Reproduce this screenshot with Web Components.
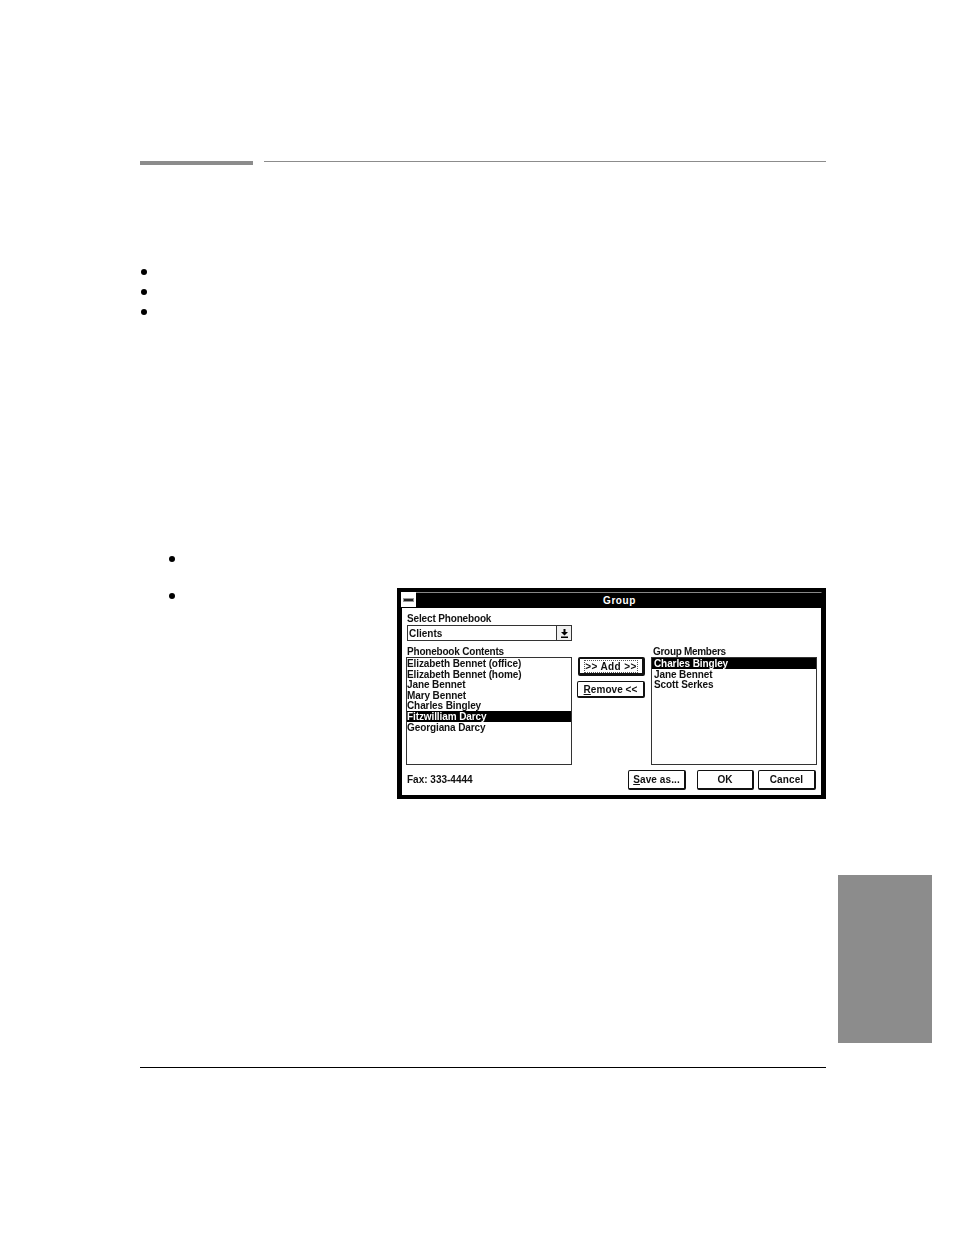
<!DOCTYPE html>
<html><head><meta charset="utf-8"><title>Group</title>
<style>html,body{margin:0;background:#fff}</style></head>
<body>
<manual-page>
  <page-header></page-header>
  <dot-list style="margin-top:97px"><span></span><span></span><span></span></dot-list>
  <dot-list style="margin:227px 0 0 28px"><span></span></dot-list>
  <section-row>
    <group-dialog></group-dialog>
  </section-row>
  <edge-tab></edge-tab>
  <page-rule></page-rule>
</manual-page>
<script>
function el(name,css,html){
  customElements.define(name,class extends HTMLElement{
    constructor(){super();this.attachShadow({mode:'open'}).innerHTML='<style>'+css+'</style>'+html;}
  });
}
el('manual-page',`:host{display:block;width:954px;height:1235px;padding:161px 128px 0 140px;box-sizing:border-box;overflow:hidden}`,`<slot></slot>`);
el('page-header',`:host{display:flex;gap:11px;align-items:flex-start;height:4px}
 .a{width:113px;height:4px;background:#8c8c8c}.b{flex:1;height:1px;background:#8c8c8c}`,`<div class="a"></div><div class="b"></div>`);
el('dot-list',`:host{display:block}
 ::slotted(span){display:flex;height:20px;align-items:center}
 ::slotted(span)::before{content:"";width:6px;height:6px;border-radius:50%;background:#000;margin-left:1px}`,`<slot></slot>`);
el('section-row',`:host{display:flex;margin-top:19px;padding-left:28px}
 .d{width:6px;height:6px;border-radius:50%;background:#000;margin:5px 222px 0 1px;flex:none}`,`<div class="d"></div><slot></slot>`);
el('edge-tab',`:host{display:block;width:94px;height:168px;margin:76px 0 0 698px;background:#8c8c8c}`,``);
el('page-rule',`:host{display:block;height:1px;background:#000;margin-top:24px}`,``);
el('win-list',`:host{display:block;box-sizing:border-box;width:166px;height:108px;border:1px solid #333;background:#fff;letter-spacing:-.1px}
 ::slotted(div){height:10.6px;line-height:11px;padding-left:var(--pad,0);white-space:nowrap}
 ::slotted(.sel){background:#000;color:#fff}`,`<slot></slot>`);
el('win-button',`:host{display:flex;box-sizing:border-box;align-items:center;justify-content:center;height:20px;border:1px solid #111;border-right-width:2px;border-bottom-width:2px;border-radius:2px;background:#fff;white-space:nowrap;letter-spacing:var(--ls,.1px)}
 :host([default]){border-width:2px;border-right-width:3px;border-bottom-width:3px}
 .f{display:flex;align-items:center;justify-content:center}
 :host([default]) .f{border:1px dotted #555;padding:0;width:54px;box-sizing:border-box;height:13px}
 ::slotted(u){text-decoration:underline}`,`<div class="f"><slot></slot></div>`);
el('group-dialog',`:host{display:block;box-sizing:border-box;width:429px;height:211px;border:4px solid #000;background:#fff;font:bold 10px/11px "Liberation Sans",sans-serif;color:#111}
 .wrap{border-right:1px solid #000;border-left:1px solid #000;border-top:1px solid #888;box-sizing:border-box;height:100%;display:flex;flex-direction:column}
 .title{height:15px;flex:none;background:#000;color:#fff;display:flex;align-items:center;position:relative;justify-content:center;padding-left:16px;letter-spacing:.6px}
 .sys{position:absolute;left:-1px;top:-1px;width:15px;height:15px;background:#fff;display:flex;align-items:center;justify-content:center;box-sizing:border-box}
 .sys i{display:block;width:9px;height:2px;background:#222;box-shadow:0 0 0 1px #999}
 .body{flex:1;display:grid;grid-template-columns:166px 67px 166px;column-gap:6px;padding:5px 0 0 4px;grid-template-rows:12px 16px 16px 108px 1fr;filter:blur(.25px)}
 .sl{grid-column:1/4;padding-left:1px;line-height:12px;letter-spacing:-.15px}
 .combo{grid-column:1/4;display:flex;width:165px;margin-left:1px;height:16px;border:1px solid #333;box-sizing:border-box}
 .combo span{flex:1;padding-left:1px;line-height:15px}
 .combo b{width:14px;border-left:1px solid #333;display:flex;align-items:center;justify-content:center;background:#f0f0f0}
 .lbl{padding:5px 0 0 1px;line-height:11px;white-space:nowrap;letter-spacing:-.2px}
 .r{padding-left:2px;letter-spacing:-.3px}
 .mid{display:flex;flex-direction:column;gap:5px}
 .mid win-button:first-child{height:19px;--ls:.4px}
 .mid win-button:last-child{height:17px;margin-left:-1px;--ls:.05px}
 win-list.l2{--pad:2px}
 .foot{grid-column:1/4;display:flex;align-items:flex-start;padding:5px 0 0 1px;width:409px}
 .foot .fax{flex:1;line-height:20px}
 .sa{width:58px;margin-right:11px}.ok{width:57px;margin-right:4px}.ca{width:58px}`,
`<div class="wrap">
 <div class="title"><div class="sys"><i></i></div>Group</div>
 <div class="body">
  <div class="sl">Select Phonebook</div>
  <div class="combo"><span>Clients</span><b><svg width="7" height="9" viewBox="0 0 7 9"><path d="M2.5 0h2v3H7L3.5 6.5 0 3h2.5zM0 7.5h7V9H0z" fill="#000"/></svg></b></div>
  <div class="lbl">Phonebook Contents</div><div></div><div class="lbl r">Group Members</div>
  <win-list><div>Elizabeth Bennet (office)</div><div>Elizabeth Bennet (home)</div><div>Jane Bennet</div><div>Mary Bennet</div><div>Charles Bingley</div><div class="sel">Fitzwilliam Darcy</div><div>Georgiana Darcy</div></win-list>
  <div class="mid"><win-button default>&gt;&gt; Add &gt;&gt;</win-button><win-button><u>R</u>emove &lt;&lt;</win-button></div>
  <win-list class="l2"><div class="sel">Charles Bingley</div><div>Jane Bennet</div><div>Scott Serkes</div></win-list>
  <div class="foot"><span class="fax">Fax: 333-4444</span><win-button class="sa"><u>S</u>ave as...</win-button><win-button class="ok">OK</win-button><win-button class="ca">Cancel</win-button></div>
 </div>
</div>`);
</script>
</body></html>
